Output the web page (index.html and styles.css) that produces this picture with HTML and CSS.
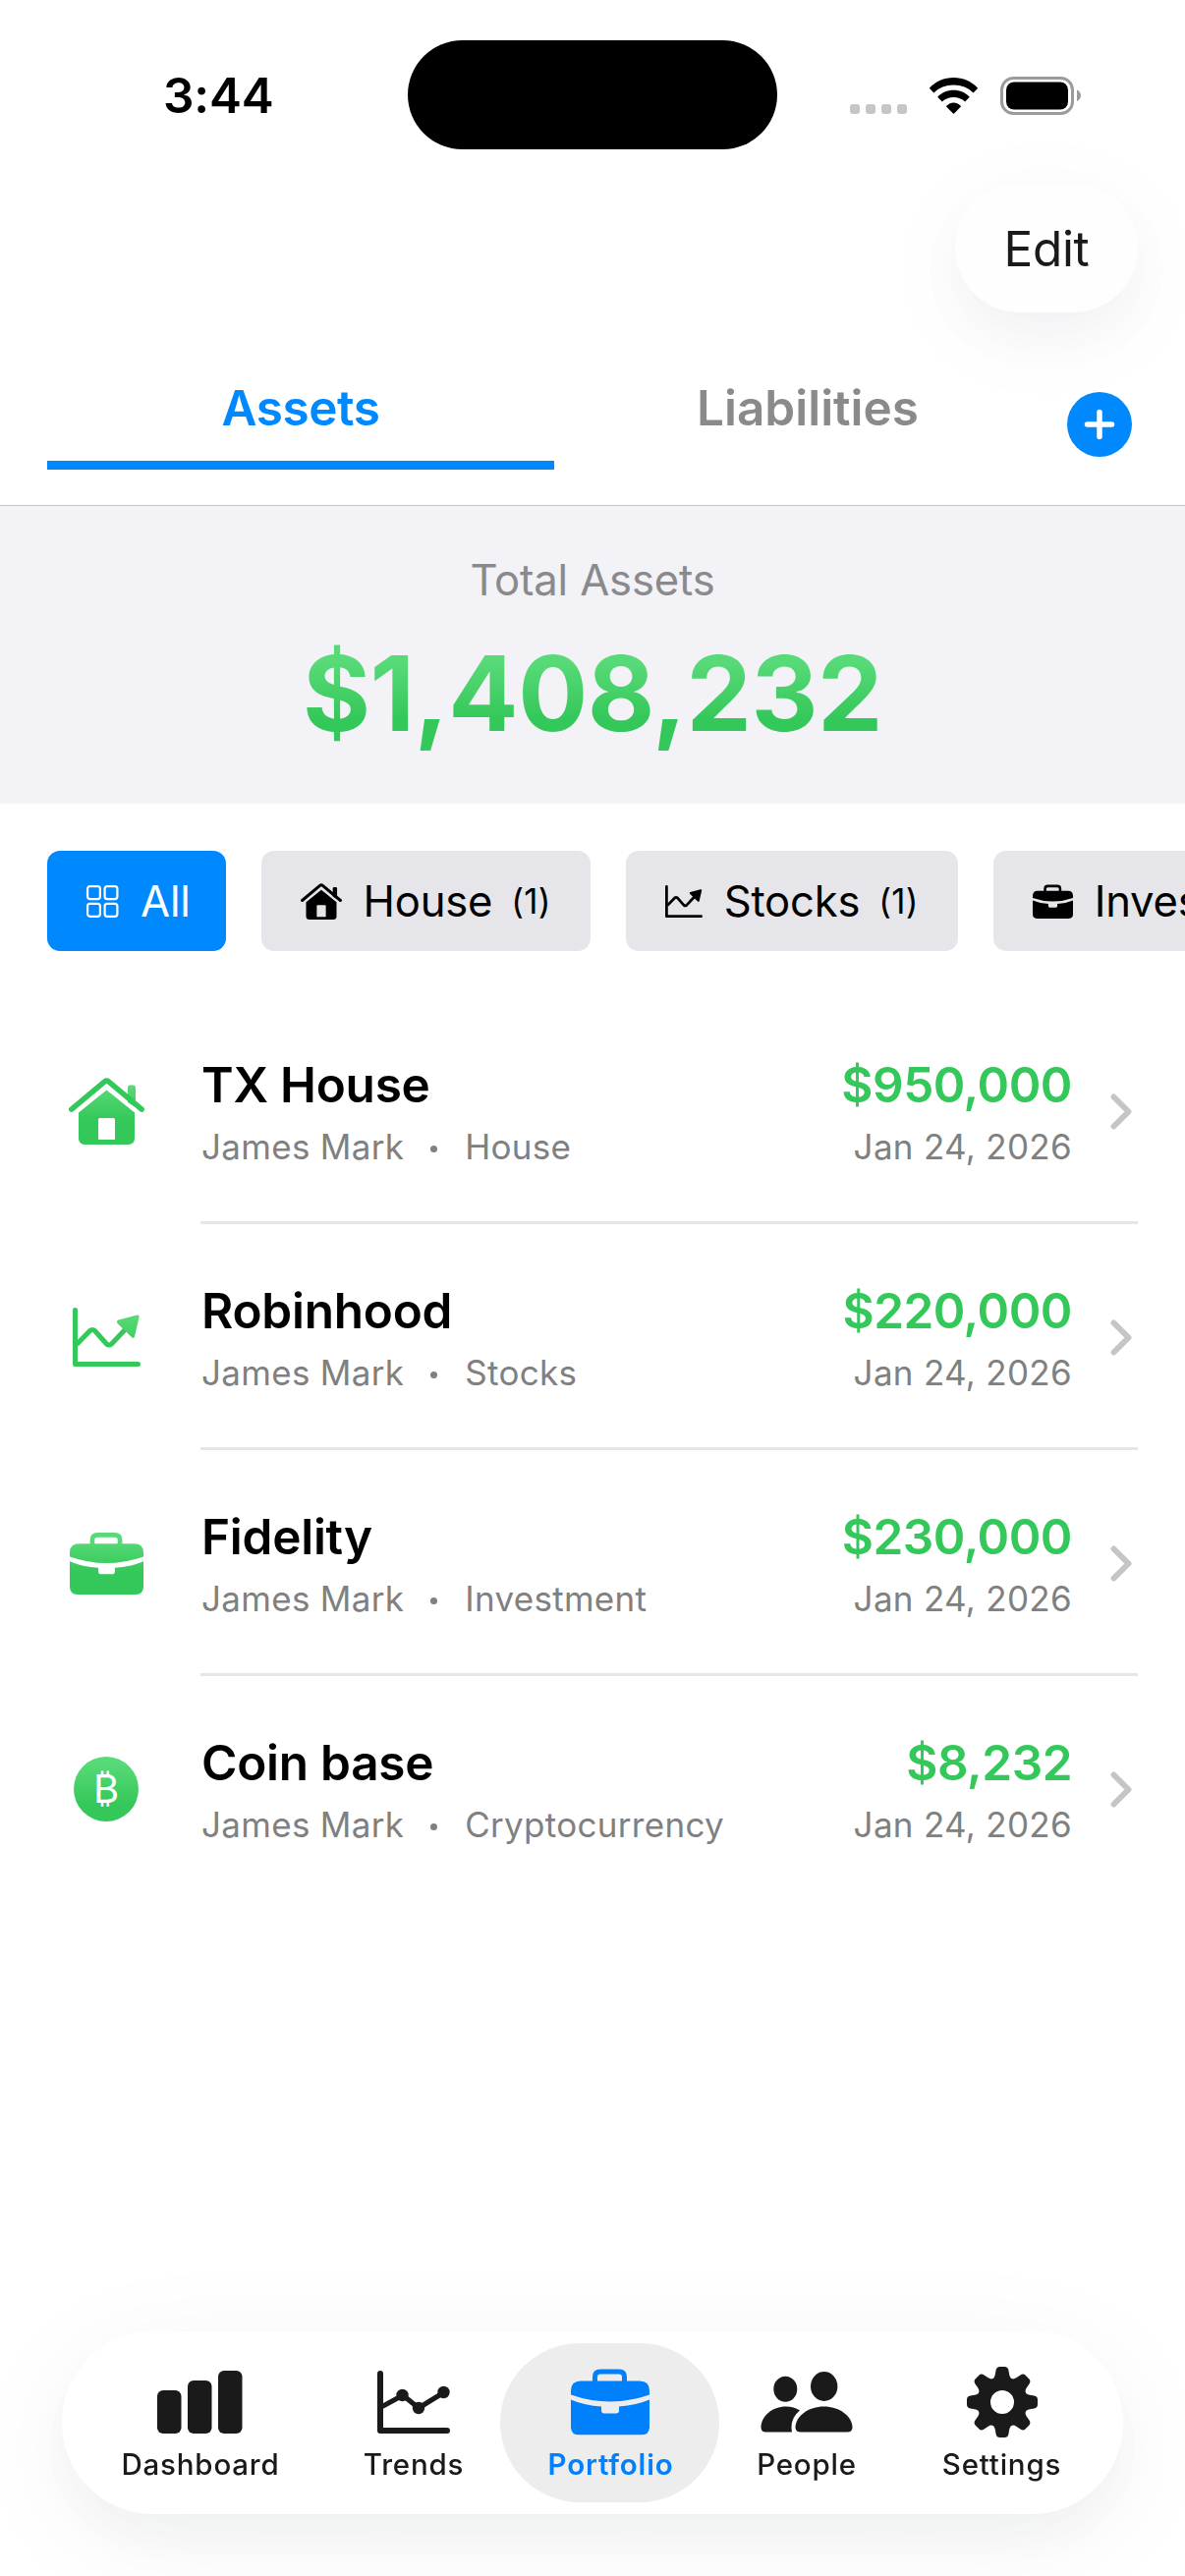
FILE: index.html
```html
<!DOCTYPE html>
<html lang="en">
<head>
    <meta charset="UTF-8">
    <meta name="viewport" content="width=device-width, initial-scale=1.0">
    <title>Portfolio</title>
    <link rel="stylesheet" href="styles.css">
</head>
<body>
    <!-- shared icons -->
    <svg class="defs" width="0" height="0" aria-hidden="true">
        <defs>
            <linearGradient id="green" gradientUnits="userSpaceOnUse" x1="0" y1="8" x2="0" y2="44">
                <stop offset="0" stop-color="#58da78"/>
                <stop offset="1" stop-color="#34c759"/>
            </linearGradient>
        </defs>
        <symbol id="icon-house" viewBox="0 0 77 68">
            <path fill-rule="evenodd" d="M10 35.5L38.5 12.5L67 35.5V61.5Q67 68 60.5 68H16.5Q10 68 10 61.5ZM31.5 41Q30 41 30 42.5V63H47V42.5Q47 41 45.5 41Z"/>
            <path d="M60 25V10Q60 7.5 62.5 7.5H65.5Q68 7.5 68 10V30Z"/>
            <path class="line" stroke-width="5.5" d="M2.8 32.2L36.5 3.9Q38.5 2.3 40.5 3.9L74.2 32.2"/>
        </symbol>
        <symbol id="icon-stocks" viewBox="0 0 69 60">
            <path class="line" stroke-width="5" d="M2.5 2.5V57.5H66.5"/>
            <path class="line butt" stroke-width="5" d="M4 37.5L17.5 23.5Q20 21.5 22.5 23.5L34.5 37Q37 39 39.5 37L55 20.5"/>
            <path d="M46.5 12.5L65.5 7.6Q68 7.5 67.5 10L63 29.5Q62 32 60 30L45.5 16Q44 13.5 46.5 12.5Z"/>
        </symbol>
        <symbol id="icon-briefcase" viewBox="0 0 80 68">
            <path fill-rule="evenodd" d="M22 13V9Q22 1 30 1H49Q57 1 57 9V13H70Q80 13 80 23V27Q60 34 40 34T0 27V23Q0 13 10 13ZM27 13H52V9Q52 6 49 6H30Q27 6 27 9Z"/>
            <path d="M0 32Q14 38 31 39V43Q31 46 34 46H46Q49 46 49 43V39Q66 38 80 32V59.5Q80 68 71.5 68H8.5Q0 68 0 59.5Z"/>
        </symbol>
    </svg>

    <header class="status-bar">
        <div class="time">3:44</div>
        <div class="island"></div>
        <div class="indicators">
            <div class="signal"><i></i><i></i><i></i><i></i></div>
            <svg class="wifi" width="51" height="37" viewBox="0 0 51 37">
                <path d="M.8 10.7C7 4 16 0 25.5 0S44 4 50.2 10.7L45.6 15.4C40.5 10.5 33.5 7.5 25.5 7.5S10.5 10.5 5.4 15.4Z"/>
                <path d="M9.2 19.7C13.5 15.3 19 12.8 25.5 12.8S37.5 15.3 41.8 19.7L37.2 24.5C34 21.5 30 20 25.5 20S17 21.5 13.8 24.5Z"/>
                <path d="M17.8 29.3C22 24.2 29 24.2 33.2 29.3L25.5 37Z"/>
            </svg>
            <svg class="battery" width="82" height="39" viewBox="0 0 82 39">
                <rect class="shell" x="1.5" y="1.5" width="72" height="36" rx="12"/>
                <rect x="6" y="5.5" width="63" height="28" rx="8"/>
                <path fill="#9b9b9b" d="M78 13.5Q82 15.5 82 19.3T78 25Z"/>
            </svg>
        </div>
    </header>

    <div class="nav">
        <div class="edit">Edit</div>
    </div>

    <div class="tabs">
        <div class="tab active">Assets</div>
        <div class="tab">Liabilities</div>
        <div class="add">
            <svg width="66" height="66" viewBox="0 0 66 66">
                <circle cx="33" cy="33" r="33" fill="#0088ff"/>
                <path d="M33 20.5V45.5M20.5 33H45.5" stroke="#fff" stroke-width="5.5" stroke-linecap="round"/>
            </svg>
        </div>
    </div>

    <section class="summary">
        <div class="summary-label">Total Assets</div>
        <div class="summary-amount">$1,408,232</div>
    </section>

    <div class="chips">
        <div class="chip selected">
            <svg class="grid-icon" width="33" height="33" viewBox="0 0 33 33">
                <rect x="1.1" y="1.1" width="12.8" height="13" rx="2.5"/>
                <rect x="18.6" y="1.1" width="12.8" height="13" rx="2.5"/>
                <rect x="1.1" y="18.8" width="12.8" height="13" rx="2.5"/>
                <rect x="18.6" y="18.8" width="12.8" height="13" rx="2.5"/>
            </svg>
            <span>All</span>
        </div>
        <div class="chip">
            <svg width="42" height="37"><use href="#icon-house"/></svg>
            <span>House</span><span class="count">(1)</span>
        </div>
        <div class="chip">
            <svg width="38" height="33"><use href="#icon-stocks"/></svg>
            <span>Stocks</span><span class="count">(1)</span>
        </div>
        <div class="chip">
            <svg width="41" height="35"><use href="#icon-briefcase"/></svg>
            <span>Investment</span>
        </div>
    </div>

    <main class="list">
        <div class="row">
            <div class="row-icon"><svg width="77" height="68"><use href="#icon-house"/></svg></div>
            <div class="row-main">
                <div class="info">
                    <div class="title">TX House</div>
                    <div class="sub">James Mark<i class="dot"></i>House</div>
                </div>
                <div class="value">
                    <div class="amount">$950,000</div>
                    <div class="sub">Jan 24, 2026</div>
                </div>
                <svg class="chevron" width="22" height="37" viewBox="0 0 22 37"><path d="M3.5 3.5L18.5 18.5L3.5 33.5"/></svg>
            </div>
        </div>
        <div class="row">
            <div class="row-icon"><svg width="69" height="60"><use href="#icon-stocks"/></svg></div>
            <div class="row-main">
                <div class="info">
                    <div class="title">Robinhood</div>
                    <div class="sub">James Mark<i class="dot"></i>Stocks</div>
                </div>
                <div class="value">
                    <div class="amount">$220,000</div>
                    <div class="sub">Jan 24, 2026</div>
                </div>
                <svg class="chevron" width="22" height="37" viewBox="0 0 22 37"><path d="M3.5 3.5L18.5 18.5L3.5 33.5"/></svg>
            </div>
        </div>
        <div class="row">
            <div class="row-icon"><svg width="75" height="64"><use href="#icon-briefcase"/></svg></div>
            <div class="row-main">
                <div class="info">
                    <div class="title">Fidelity</div>
                    <div class="sub">James Mark<i class="dot"></i>Investment</div>
                </div>
                <div class="value">
                    <div class="amount">$230,000</div>
                    <div class="sub">Jan 24, 2026</div>
                </div>
                <svg class="chevron" width="22" height="37" viewBox="0 0 22 37"><path d="M3.5 3.5L18.5 18.5L3.5 33.5"/></svg>
            </div>
        </div>
        <div class="row">
            <div class="row-icon"><div class="coin">₿</div></div>
            <div class="row-main">
                <div class="info">
                    <div class="title">Coin base</div>
                    <div class="sub">James Mark<i class="dot"></i>Cryptocurrency</div>
                </div>
                <div class="value">
                    <div class="amount">$8,232</div>
                    <div class="sub">Jan 24, 2026</div>
                </div>
                <svg class="chevron" width="22" height="37" viewBox="0 0 22 37"><path d="M3.5 3.5L18.5 18.5L3.5 33.5"/></svg>
            </div>
        </div>
    </main>

    <nav class="tab-bar">
        <div class="item">
            <svg width="89" height="72" viewBox="0 0 89 72">
                <rect x="0" y="24" width="24.5" height="44" rx="6"/>
                <rect x="31" y="14" width="24.5" height="54" rx="6"/>
                <rect x="62" y="4" width="24.5" height="64" rx="6"/>
            </svg>
            <span>Dashboard</span>
        </div>
        <div class="item">
            <svg width="74" height="72" viewBox="0 0 74 72">
                <path class="line" stroke-width="6" d="M3 7V65H71"/>
                <path class="line butt" stroke-width="5" d="M4 41L26 29L42 42L68 26"/>
                <circle cx="25.5" cy="29" r="6.2"/>
                <circle cx="42" cy="42" r="6.2"/>
                <circle cx="67.5" cy="26" r="6.2"/>
            </svg>
            <span>Trends</span>
        </div>
        <div class="item active">
            <svg width="80" height="72" viewBox="0 -1.5 80 72"><use href="#icon-briefcase" width="80" height="68"/></svg>
            <span>Portfolio</span>
        </div>
        <div class="item people">
            <svg width="94" height="72" viewBox="0 0 94 72">
                <ellipse cx="25.3" cy="22.7" rx="12" ry="13"/>
                <ellipse cx="64.7" cy="20" rx="13.7" ry="15"/>
                <path d="M5.5 66.5Q.5 66.5 .5 61.5C1 50 12 40.5 26 40.5Q34 40.5 40 44.5Q29.5 53 32 66.5Z"/>
                <path d="M41 66.5Q35.5 66.5 35.5 61.5C36 50 49 40.5 64.5 40.5S93 50 93.5 61.5Q93.5 66.5 88 66.5Z"/>
            </svg>
            <span>People</span>
        </div>
        <div class="item">
            <svg width="72" height="72" viewBox="0 0 72 72">
                <defs>
                    <path id="tooth" d="M25 13Q28 12 28.8 8L29.6 3.5Q30.3 0 33.5 0H38.5Q41.7 0 42.4 3.5L43.200 8Q44 12 47 13L42 20H30Z"/>
                </defs>
                <circle class="ring" cx="36" cy="36" r="18.5" stroke-width="13"/>
                <use href="#tooth"/>
                <use href="#tooth" transform="rotate(45 36 36)"/>
                <use href="#tooth" transform="rotate(90 36 36)"/>
                <use href="#tooth" transform="rotate(135 36 36)"/>
                <use href="#tooth" transform="rotate(180 36 36)"/>
                <use href="#tooth" transform="rotate(225 36 36)"/>
                <use href="#tooth" transform="rotate(270 36 36)"/>
                <use href="#tooth" transform="rotate(315 36 36)"/>
            </svg>
            <span>Settings</span>
        </div>
    </nav>
</body>
</html>
```
FILE: styles.css
```css
* {
    box-sizing: border-box;
}
body {
    margin: 0;
    height: 2622px;
    background-color: #fff;
    color: #000;
    font-family: Inter, "Liberation Sans", sans-serif;
    overflow: hidden;
}
svg {
    display: block;
    flex: none;
    fill: currentColor;
}
.defs {
    position: absolute;
}
.line {
    fill: none;
    stroke: currentColor;
    stroke-linecap: round;
    stroke-linejoin: round;
}
.butt {
    stroke-linecap: butt;
}

/* status bar */
.status-bar {
    display: grid;
    grid-template-columns: 415px 376px 1fr;
    align-items: center;
    padding-top: 41px;
}
.time {
    padding-left: 166px;
    font-size: 49.5px;
    font-weight: 600;
    letter-spacing: -0.2px;
}
.island {
    height: 111px;
    border-radius: 56px;
    background-color: #000;
}
.indicators {
    display: flex;
    align-items: center;
    padding: 1px 0 0 74px;
}
.signal {
    display: flex;
    gap: 6px;
    margin: 27px 22px 0 0;
}
.signal i {
    width: 10px;
    height: 10px;
    border-radius: 3px;
    background-color: #c6c6c6;
}
.battery {
    margin-left: 22px;
}
.shell {
    fill: none;
    stroke: #9b9b9b;
    stroke-width: 3;
}

.nav {
    display: flex;
    justify-content: flex-end;
    padding: 34px 48px 0;
}
.edit {
    width: 186px;
    height: 132px;
    border-radius: 66px;
    background-color: #fefefe;
    box-shadow: 0 22px 110px rgba(20, 30, 40, 0.04), 0 24px 50px rgba(30, 20, 80, 0.03);
    color: #1a1a1a;
    font-size: 49.5px;
    line-height: 134px;
    letter-spacing: -0.3px;
    text-align: center;
}

/* assets / liabilities */
.tabs {
    display: flex;
    align-items: center;
    padding: 67px 48px 36px;
    border-bottom: 1px solid #c2c2c4;
}
.tab {
    width: 516px;
    height: 93px;
    font-size: 49.5px;
    font-weight: 600;
    line-height: 60px;
    text-align: center;
    color: #8a8a8c;
}
.tab.active {
    color: #0088ff;
    letter-spacing: -0.4px;
    border-bottom: 9px solid #0088ff;
}
.add {
    margin-left: 6px;
}

.summary {
    height: 303px;
    padding-top: 49px;
    background-color: #f2f2f7;
    text-align: center;
}
.summary-label {
    font-size: 43.6px;
    line-height: 54px;
    letter-spacing: -0.15px;
    color: #8a8a8c;
}
.summary-amount {
    width: fit-content;
    margin: 23px auto 0;
    font-size: 105.5px;
    font-weight: 700;
    line-height: 130px;
    letter-spacing: -0.5px;
    color: transparent;
    background: linear-gradient(#58da78 25%, #34c759 70%);
    -webkit-background-clip: text;
    background-clip: text;
}

/* filter chips */
.chips {
    display: flex;
    gap: 36px;
    margin-top: 48px;
    padding-left: 48px;
    overflow: hidden;
}
.chip {
    display: flex;
    flex: none;
    align-items: center;
    height: 102px;
    padding: 0 40px;
    border-radius: 13px;
    background-color: #e5e5ea;
    font-size: 43.6px;
    letter-spacing: -0.2px;
    white-space: nowrap;
}
.chip svg {
    margin-right: 22px;
}
.chip.selected {
    padding-right: 36px;
    background-color: #0088ff;
    color: #fff;
}
.grid-icon {
    fill: none;
    stroke: #fff;
    stroke-width: 2.2;
}
.count {
    margin-left: 19px;
    font-size: 35px;
    letter-spacing: 0.2px;
}

/* holdings */
.list {
    margin-top: 48px;
    padding: 0 48px 0 60px;
}
.row {
    display: flex;
    align-items: center;
    height: 230px;
}
.row-icon {
    display: flex;
    justify-content: center;
    width: 96px;
    margin-right: 48px;
}
.row-icon svg {
    color: #34c759;
    fill: url(#green);
}
.coin {
    width: 66px;
    height: 66px;
    border-radius: 50%;
    background: linear-gradient(#58da78 10%, #34c759 75%);
    color: #fff;
    font-size: 40px;
    line-height: 66px;
    text-align: center;
}
.row-main {
    display: flex;
    flex: 1;
    align-items: center;
    height: 230px;
    padding: 4px 6px 0 0;
    border-bottom: 3px solid #e5e5ea;
}
.row:last-child .row-main {
    border-bottom-color: transparent;
}
.info {
    flex: 1;
    padding-left: 1px;
}
.title, .amount {
    margin-bottom: 11px;
    font-size: 49.5px;
    font-weight: 600;
    line-height: 60px;
    letter-spacing: -0.25px;
}
.amount {
    color: #34c759;
    letter-spacing: -0.5px;
}
.sub {
    display: flex;
    align-items: center;
    font-size: 35px;
    line-height: 44px;
    letter-spacing: 0.3px;
    color: #808080;
}
.dot {
    width: 7px;
    height: 7px;
    margin: 4px 28px 0 27px;
    border-radius: 50%;
    background-color: #808080;
}
.value {
    display: flex;
    flex-direction: column;
    align-items: flex-end;
    margin-right: 39px;
}
.chevron {
    fill: none;
    stroke: #c5c5c7;
    stroke-width: 6;
    stroke-linecap: round;
    stroke-linejoin: round;
}

/* floating tab bar */
.tab-bar {
    position: fixed;
    left: 63px;
    bottom: 63px;
    display: grid;
    grid-template-columns: 258px 176px 223px 176px 223px;
    width: 1080px;
    height: 186px;
    padding: 12px;
    border-radius: 93px;
    background-color: #fff;
    box-shadow: 0 24px 120px rgba(20, 30, 40, 0.05), 0 24px 60px rgba(30, 20, 80, 0.04);
}
.item {
    display: flex;
    flex-direction: column;
    align-items: center;
    padding-top: 24px;
    border-radius: 81px;
    color: #1a1a1a;
    font-size: 29.5px;
    font-weight: 500;
    line-height: 36px;
    letter-spacing: 0.8px;
}
.item span {
    margin-top: 9px;
}
.item.active {
    background-color: #ededed;
    color: #0080fa;
    font-weight: 600;
}
.item.active span {
    padding-left: 2px;
}
.people {
    padding-left: 2px;
}
.ring {
    fill: none;
    stroke: currentColor;
}
```
